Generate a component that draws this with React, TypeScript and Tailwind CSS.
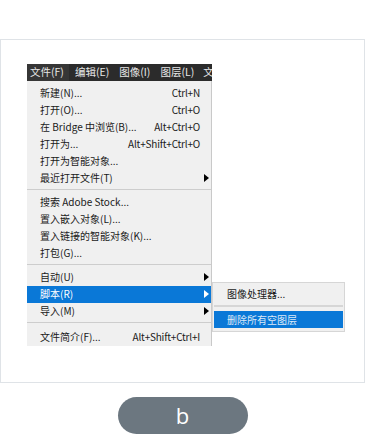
import React from "react";

const font = { fontFamily: '"Noto Sans CJK SC", "Noto Sans", sans-serif' };

function Arrow({ white }: { white?: boolean }) {
  return (
    <svg width="5" height="8" viewBox="0 0 5 8" className="absolute right-[2px] top-1/2 -translate-y-1/2">
      <path d="M0 0 L5 4 L0 8 Z" fill={white ? "#ffffff" : "#000000"} />
    </svg>
  );
}

function Row({ label, shortcut, arrow, active }: { label: string; shortcut?: string; arrow?: boolean; active?: boolean }) {
  return (
    <div
      className={`relative flex h-[17px] items-center justify-between pl-[13px] pr-[11px] ${active ? "bg-[#0a78d7] text-white" : "text-[#1a1a1a]"}`}
    >
      <span>{label}</span>
      {shortcut && <span className="tracking-[-0.2px]">{shortcut}</span>}
      {arrow && <Arrow white={active} />}
    </div>
  );
}

function Sep({ h, top }: { h: string; top: string }) {
  return (
    <div className={`${h} relative`}>
      <div className={`absolute left-0 right-0 ${top} h-px bg-[#cdcdcd]`} />
    </div>
  );
}

export default function App() {
  return (
    <div className="w-[365px] h-[439px] bg-white overflow-hidden" style={font}>
      <div className="mt-[39px] h-[344px] border border-[#dfe3e7] pl-[26px] pt-[24px]">
        <div className="relative w-[185px] text-[10px] leading-none">
          <div className="flex h-[17px] items-center bg-[#2b2b2b] text-[#e6e6e6] overflow-hidden whitespace-nowrap text-[10.5px]">
            <span className="h-full flex items-center bg-[#363636] pl-[3px] pr-[5px] shrink-0">文件(F)</span>
            <span className="ml-[6px] shrink-0">编辑(E)</span>
            <span className="ml-[10px] shrink-0">图像(I)</span>
            <span className="ml-[10px] shrink-0">图层(L)</span>
            <span className="ml-[9px] shrink-0">文</span>
          </div>
          <div className="bg-[#f0f0f0] border-r border-[#c9c9c9] pt-[3px] pb-[1px]">
            <Row label="新建(N)..." shortcut="Ctrl+N" />
            <Row label="打开(O)..." shortcut="Ctrl+O" />
            <Row label="在 Bridge 中浏览(B)..." shortcut="Alt+Ctrl+O" />
            <Row label="打开为..." shortcut="Alt+Shift+Ctrl+O" />
            <Row label="打开为智能对象..." />
            <Row label="最近打开文件(T)" arrow />
            <Sep h="h-[7.5px]" top="top-[3px]" />
            <Row label="搜索 Adobe Stock..." />
            <Row label="置入嵌入对象(L)..." />
            <Row label="置入链接的智能对象(K)..." />
            <Row label="打包(G)..." />
            <Sep h="h-[7px]" top="top-[2px]" />
            <Row label="自动(U)" arrow />
            <Row label="脚本(R)" arrow active />
            <Row label="导入(M)" arrow />
            <Sep h="h-[8.5px]" top="top-[2px]" />
            <Row label="文件简介(F)..." shortcut="Alt+Shift+Ctrl+I" />
          </div>
          <div className="absolute left-[185px] top-[218px] w-[133px] h-[50px] bg-[#f0f0f0] border border-[#d6d6d6] px-px pt-[2px]">
            <div className="flex h-[18px] items-center pl-[13px] text-[#1a1a1a]">图像处理器...</div>
            <div className="h-[2px] mt-[2px] bg-[#d6d6d6]" />
            <div className="mt-[4px] flex h-[17px] items-center pl-[13px] bg-[#0a78d7] text-[#dce9f7]">删除所有空图层</div>
          </div>
        </div>
      </div>
      <div className="flex justify-center pt-[14px]">
        <div
          className="flex h-[37px] w-[130px] items-center justify-center rounded-full bg-[#6c7780] text-white text-[22px]"
          style={{ fontFamily: '"Open Sans", "Noto Sans", sans-serif' }}
        >
          b
        </div>
      </div>
    </div>
  );
}
